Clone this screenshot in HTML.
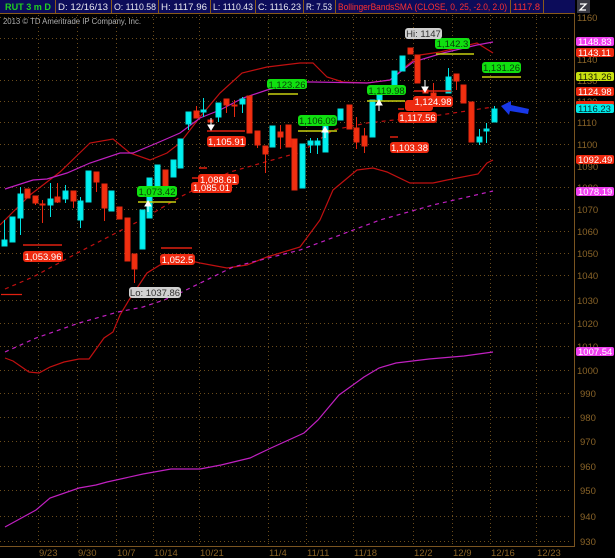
<!DOCTYPE html>
<html><head><meta charset="utf-8"><style>
html,body{margin:0;padding:0;background:#000;}
svg{display:block;font-family:"Liberation Sans",sans-serif;}
</style></head><body>
<svg width="615" height="558" viewBox="0 0 615 558" xmlns="http://www.w3.org/2000/svg">
<rect width="615" height="558" fill="#000"/>
<!-- header -->
<rect x="0" y="0" width="575" height="13" fill="#0c0c5a"/>
<line x1="0" y1="13.5" x2="575" y2="13.5" stroke="#8a5a1a" stroke-width="1"/>
<g stroke="#8a5a1a" stroke-width="1">
<line x1="55.5" y1="0" x2="55.5" y2="13"/><line x1="111.5" y1="0" x2="111.5" y2="13"/>
<line x1="158.5" y1="0" x2="158.5" y2="13"/><line x1="210.5" y1="0" x2="210.5" y2="13"/>
<line x1="255.5" y1="0" x2="255.5" y2="13"/><line x1="303.5" y1="0" x2="303.5" y2="13"/>
<line x1="335.5" y1="0" x2="335.5" y2="13"/><line x1="510.5" y1="0" x2="510.5" y2="13"/>
<line x1="543.5" y1="0" x2="543.5" y2="13"/>
</g>
<g font-size="9.5" fill="#e8e8f0" lengthAdjust="spacingAndGlyphs">
<text x="5" y="10" fill="#20d020" font-weight="bold" textLength="46" lengthAdjust="spacingAndGlyphs">RUT 3 m D</text>
<text x="58" y="10" textLength="50" lengthAdjust="spacingAndGlyphs">D: 12/16/13</text>
<text x="114" y="10" textLength="42" lengthAdjust="spacingAndGlyphs">O: 1110.58</text>
<text x="161" y="10" textLength="46" lengthAdjust="spacingAndGlyphs">H: 1117.96</text>
<text x="213" y="10" textLength="40" lengthAdjust="spacingAndGlyphs">L: 1110.43</text>
<text x="258" y="10" textLength="43" lengthAdjust="spacingAndGlyphs">C: 1116.23</text>
<text x="306" y="10" textLength="26" lengthAdjust="spacingAndGlyphs">R: 7.53</text>
<text x="338" y="10" fill="#ff3030" textLength="169" lengthAdjust="spacingAndGlyphs">BollingerBandsSMA (CLOSE, 0, 25, -2.0, 2.0)</text>
<text x="513" y="10" fill="#ff3030" textLength="27" lengthAdjust="spacingAndGlyphs">1117.8</text>
</g>
<rect x="577" y="0" width="13" height="13" fill="#3a3a44"/>
<path d="M580 4 L586 4 L580 10 L586 10" stroke="#fff" stroke-width="1.3" fill="none"/>
<text x="3" y="24" font-size="8" fill="#b0b0b0" textLength="138" lengthAdjust="spacingAndGlyphs">2013 © TD Ameritrade IP Company, Inc.</text>

<!-- grid -->
<g stroke="#6a4c1c" stroke-width="1" stroke-dasharray="1,3">
<line x1="0" y1="17.5" x2="572" y2="17.5"/><line x1="0" y1="38.5" x2="572" y2="38.5"/>
<line x1="0" y1="59.5" x2="572" y2="59.5"/><line x1="0" y1="80.5" x2="572" y2="80.5"/>
<line x1="0" y1="101.5" x2="572" y2="101.5"/><line x1="0" y1="122.5" x2="572" y2="122.5"/>
<line x1="0" y1="144.5" x2="572" y2="144.5"/><line x1="0" y1="166.5" x2="572" y2="166.5"/>
<line x1="0" y1="187.5" x2="572" y2="187.5"/><line x1="0" y1="209.5" x2="572" y2="209.5"/>
<line x1="0" y1="231.5" x2="572" y2="231.5"/><line x1="0" y1="253.5" x2="572" y2="253.5"/>
<line x1="0" y1="275.5" x2="572" y2="275.5"/><line x1="0" y1="300.5" x2="572" y2="300.5"/>
<line x1="0" y1="323.5" x2="572" y2="323.5"/><line x1="0" y1="346.5" x2="572" y2="346.5"/>
<line x1="0" y1="370.5" x2="572" y2="370.5"/><line x1="0" y1="393.5" x2="572" y2="393.5"/>
<line x1="0" y1="417.5" x2="572" y2="417.5"/><line x1="0" y1="441.5" x2="572" y2="441.5"/>
<line x1="0" y1="466.5" x2="572" y2="466.5"/><line x1="0" y1="490.5" x2="572" y2="490.5"/>
<line x1="0" y1="516.5" x2="572" y2="516.5"/><line x1="0" y1="541.5" x2="572" y2="541.5"/>
<line x1="38.5" y1="15" x2="38.5" y2="546"/><line x1="77.5" y1="15" x2="77.5" y2="546"/>
<line x1="116.5" y1="15" x2="116.5" y2="546"/><line x1="153.5" y1="15" x2="153.5" y2="546"/>
<line x1="199.5" y1="15" x2="199.5" y2="546"/><line x1="268.5" y1="15" x2="268.5" y2="546"/>
<line x1="306.5" y1="15" x2="306.5" y2="546"/><line x1="353.5" y1="15" x2="353.5" y2="546"/>
<line x1="413.5" y1="15" x2="413.5" y2="546"/><line x1="452.5" y1="15" x2="452.5" y2="546"/>
<line x1="490.5" y1="15" x2="490.5" y2="546"/><line x1="536.5" y1="15" x2="536.5" y2="546"/>
</g>
<!-- axes -->
<line x1="574.5" y1="14" x2="574.5" y2="547" stroke="#7a5420" stroke-width="1"/>
<line x1="0" y1="546.5" x2="575" y2="546.5" stroke="#7a5420" stroke-width="1"/>
<g font-size="9.5" fill="#8a6428">
<text x="577" y="21">1160</text><text x="577" y="63">1140</text><text x="577" y="84">1130</text>
<text x="577" y="105">1120</text><text x="577" y="126">1110</text><text x="577" y="148">1100</text>
<text x="577" y="170">1090</text><text x="577" y="191">1080</text><text x="577" y="213">1070</text>
<text x="577" y="235">1060</text><text x="577" y="257">1050</text><text x="577" y="279">1040</text>
<text x="577" y="304">1030</text><text x="577" y="327">1020</text><text x="577" y="350">1010</text>
<text x="577" y="374">1000</text><text x="580" y="397">990</text><text x="580" y="421">980</text>
<text x="580" y="445">970</text><text x="580" y="470">960</text><text x="580" y="494">950</text>
<text x="580" y="520">940</text><text x="580" y="545">930</text>
<text x="39" y="556">9/23</text><text x="78" y="556">9/30</text><text x="117" y="556">10/7</text>
<text x="154" y="556">10/14</text><text x="200" y="556">10/21</text><text x="269" y="556">11/4</text>
<text x="307" y="556">11/11</text><text x="354" y="556">11/18</text><text x="414" y="556">12/2</text>
<text x="453" y="556">12/9</text><text x="491" y="556">12/16</text><text x="537" y="556">12/23</text>
</g>

<!-- indicator lines -->
<g fill="none" stroke-width="1.2">
<polyline stroke="#c01010" points="0,225 5,220 30,195 60,172 90,143 113,139 130,153 150,160 167,153 180,143 200,117 220,93 242,73 267,67 300,63 313,63 327,77 343,82 367,83 390,80 410,63 420,55 440,52 477,43 493,53"/>
<polyline stroke="#c01010" points="5,358 13,361 29,372 39,373 50,367 64,362 79,359 89,359 104,338 113,332 120,315 129,300 147,273 160,265 187,260 200,263 227,268 247,265 267,257 300,247 320,220 333,190 357,170 373,168 387,172 410,183 433,183 447,180 478,174 487,163 493,160"/>
<polyline stroke="#c020c0" points="5,189 33,180 47,179 67,173 90,163 120,153 133,153 157,143 180,133 200,118 220,110 243,98 267,90 300,82 313,82 367,83 390,80 413,62 443,53 477,45 493,42"/>
<polyline stroke="#c01010" stroke-dasharray="4,4" points="5,289 33,277 83,250 143,219 180,197 230,172 290,155 300,153 333,130 367,123 440,115 493,107"/>
<polyline stroke="#c020c0" stroke-dasharray="4,4" points="5,352 36,338 79,323 118,312 143,307 164,300 180,293 233,267 300,250 380,220 433,205 493,191"/>
<polyline stroke="#c020c0" points="5,527 36,510 50,498 79,488 96,485 107,482 143,474 171,469 200,469 221,465 250,458 271,448 304,433 318,420 339,395 364,377 379,368 396,363 429,359 464,356 493,352"/>
</g>
<line x1="1" y1="294.5" x2="22" y2="294.5" stroke="#e02010" stroke-width="1.2"/>

<!-- candles -->
<g stroke-width="1">
<g stroke="#00e0e0" fill="#00f0f0">
<line x1="4.5" y1="220" x2="4.5" y2="246"/><rect x="2" y="240" width="5" height="6"/>
<rect x="10" y="217" width="5" height="25"/>
<line x1="20.5" y1="187" x2="20.5" y2="235"/><rect x="18" y="194" width="5" height="24"/>
<line x1="50.5" y1="183" x2="50.5" y2="217"/><rect x="48" y="199" width="5" height="6"/>
<line x1="65.5" y1="185" x2="65.5" y2="203"/><rect x="63" y="191" width="5" height="8"/>
<line x1="80.5" y1="197" x2="80.5" y2="228"/><rect x="78" y="201" width="5" height="19"/>
<rect x="86" y="171" width="5" height="31"/>
<rect x="109" y="191" width="5" height="20"/>
<rect x="140" y="210" width="5" height="39"/>
<rect x="147" y="178" width="5" height="40"/>
<rect x="155" y="165" width="5" height="22"/>
<rect x="171" y="160" width="5" height="17"/>
<rect x="178" y="139" width="5" height="29"/>
<line x1="188.5" y1="112" x2="188.5" y2="130"/><rect x="186" y="112" width="5" height="12"/>
<line x1="203.5" y1="98" x2="203.5" y2="117"/><rect x="201" y="110" width="5" height="2"/>
<line x1="218.5" y1="103" x2="218.5" y2="122"/><rect x="216" y="103" width="5" height="14"/>
<line x1="242.5" y1="97" x2="242.5" y2="113"/><rect x="240" y="99" width="5" height="5"/>
<rect x="270" y="126" width="5" height="21"/>
<rect x="300" y="144" width="5" height="44"/>
<line x1="310.5" y1="138" x2="310.5" y2="153"/><rect x="308" y="141" width="5" height="4"/>
<line x1="317.5" y1="138" x2="317.5" y2="154"/><rect x="315" y="141" width="5" height="4"/>
<rect x="323" y="126" width="5" height="26"/>
<rect x="338" y="109" width="5" height="11"/>
<rect x="370" y="100" width="5" height="37"/>
<rect x="377" y="95" width="5" height="6"/>
<rect x="392" y="71" width="5" height="14"/>
<rect x="400" y="56" width="5" height="15"/>
<line x1="448.5" y1="68" x2="448.5" y2="93"/><rect x="446" y="77" width="5" height="16"/>
<line x1="479.5" y1="129" x2="479.5" y2="145"/><rect x="477" y="137" width="5" height="5"/>
<line x1="486.5" y1="123" x2="486.5" y2="143"/><rect x="484" y="129" width="5" height="2"/>
<line x1="494.5" y1="106" x2="494.5" y2="122"/><rect x="492" y="109" width="5" height="13"/>
</g>
<g stroke="#e82810" fill="#f03010">
<rect x="25" y="189" width="5" height="9"/>
<line x1="35.5" y1="196" x2="35.5" y2="205"/><rect x="33" y="196" width="5" height="7"/>
<line x1="42.5" y1="200" x2="42.5" y2="223"/><rect x="40" y="204" width="5" height="1"/>
<line x1="57.5" y1="183" x2="57.5" y2="203"/><rect x="55" y="197" width="5" height="5"/>
<line x1="73.5" y1="191" x2="73.5" y2="208"/><rect x="71" y="191" width="5" height="10"/>
<line x1="96.5" y1="172" x2="96.5" y2="192"/><rect x="94" y="172" width="5" height="10"/>
<line x1="104.5" y1="184" x2="104.5" y2="221"/><rect x="102" y="184" width="5" height="24"/>
<rect x="117" y="207" width="5" height="12"/>
<rect x="125" y="218" width="5" height="43"/>
<line x1="134.5" y1="254" x2="134.5" y2="283"/><rect x="132" y="254" width="5" height="15"/>
<rect x="163" y="170" width="5" height="17"/>
<line x1="196.5" y1="106" x2="196.5" y2="118"/><rect x="194" y="111" width="5" height="7"/>
<line x1="226.5" y1="99" x2="226.5" y2="113"/><rect x="224" y="99" width="5" height="6"/>
<line x1="234.5" y1="100" x2="234.5" y2="117"/><rect x="232" y="105" width="5" height="1"/>
<rect x="247" y="96" width="5" height="37"/>
<line x1="257.5" y1="131" x2="257.5" y2="148"/><rect x="255" y="131" width="5" height="14"/>
<line x1="265.5" y1="146" x2="265.5" y2="173"/><rect x="263" y="146" width="5" height="8"/>
<line x1="280.5" y1="125" x2="280.5" y2="149"/><rect x="278" y="132" width="5" height="5"/>
<rect x="286" y="125" width="5" height="22"/>
<rect x="292" y="139" width="5" height="51"/>
<rect x="347" y="105" width="5" height="24"/>
<line x1="356.5" y1="117" x2="356.5" y2="149"/><rect x="354" y="128" width="5" height="14"/>
<line x1="364.5" y1="128" x2="364.5" y2="153"/><rect x="362" y="136" width="5" height="10"/>
<rect x="408" y="48" width="5" height="6"/>
<rect x="415" y="55" width="5" height="28"/>
<rect x="423" y="90" width="5" height="3"/>
<line x1="433.5" y1="83" x2="433.5" y2="97"/><rect x="431" y="93" width="5" height="4"/>
<line x1="456.5" y1="74" x2="456.5" y2="90"/><rect x="454" y="74" width="5" height="7"/>
<rect x="461" y="85" width="5" height="18"/>
<rect x="469" y="102" width="5" height="40"/>
<rect x="208" y="120" width="5" height="2"/>
</g>
</g>

<!-- level lines -->
<g stroke-width="1.5">
<g stroke="#e02010">
<line x1="23" y1="245" x2="62" y2="245"/><line x1="161" y1="248" x2="192" y2="248"/>
<line x1="199" y1="168" x2="207" y2="168"/><line x1="207" y1="131" x2="245" y2="131"/>
<line x1="390" y1="137" x2="398" y2="137"/><line x1="414" y1="91" x2="451" y2="91"/>
<line x1="398" y1="109" x2="404" y2="109"/><line x1="192" y1="178" x2="198" y2="178"/>
</g>
<g stroke="#c8d010">
<line x1="138" y1="202" x2="176" y2="202"/><line x1="268" y1="94" x2="298" y2="94"/>
<line x1="298" y1="131" x2="337" y2="131"/><line x1="367" y1="101" x2="405" y2="101"/>
<line x1="436" y1="54" x2="474" y2="54"/><line x1="482" y1="77" x2="521" y2="77"/>
</g>
</g>
<!-- white arrows -->
<g fill="#fff" stroke="#fff">
<path d="M148 201 L145 206 L151 206 Z"/><line x1="148" y1="205" x2="148" y2="212"/>
<path d="M325 127 L322 132 L328 132 Z"/><line x1="325" y1="131" x2="325" y2="138"/>
<path d="M379 100 L376 105 L382 105 Z"/><line x1="379" y1="104" x2="379" y2="111"/>
<path d="M211 130 L208 125 L214 125 Z"/><line x1="211" y1="118" x2="211" y2="126"/>
<path d="M425 92 L422 87 L428 87 Z"/><line x1="425" y1="80" x2="425" y2="88"/>
</g>
<!-- blue arrow -->
<path d="M501 106 L511 101 L511 105 L529 109 L528 114 L510 111 L509 115 Z" fill="#1838e8"/>

<!-- bubbles -->
<g font-size="9.5" text-anchor="middle">
<g fill="#ee2a10"><rect x="23" y="251" width="40" height="11" rx="3"/><rect x="160" y="254" width="35" height="11" rx="3"/>
<rect x="191" y="182" width="41" height="11" rx="3"/><rect x="198" y="174" width="41" height="11" rx="3"/>
<rect x="207" y="136" width="39" height="11" rx="3"/><rect x="390" y="142" width="39" height="11" rx="3"/>
<rect x="405" y="100" width="28" height="11" rx="3"/><rect x="398" y="112" width="39" height="11" rx="3"/>
<rect x="413" y="96" width="40" height="11" rx="3"/></g>
<g fill="#10e010"><rect x="137" y="186" width="40" height="11" rx="3"/><rect x="267" y="79" width="40" height="10" rx="3"/>
<rect x="298" y="115" width="39" height="11" rx="3"/><rect x="367" y="85" width="39" height="10" rx="3"/>
<rect x="435" y="38" width="35" height="11" rx="3"/><rect x="482" y="62" width="39" height="11" rx="3"/></g>
<g fill="#d0d0d0"><rect x="129" y="287" width="52" height="11" rx="3"/><rect x="405" y="28" width="37" height="11" rx="3"/></g>
<g fill="#fff">
<text x="43" y="260">1,053.96</text><text x="177.5" y="263">1,052.5</text>
<text x="211.5" y="191">1,085.01</text><text x="218.5" y="183">1,088.61</text>
<text x="226.5" y="145">1,105.91</text><text x="409.5" y="151">1,103.38</text>
<text x="417.5" y="121">1,117.56</text><text x="433" y="105">1,124.98</text>
</g>
<g fill="#084008">
<text x="157" y="195">1,073.42</text><text x="287" y="88">1,123.26</text>
<text x="317.5" y="124">1,106.09</text><text x="386.5" y="94">1,119.98</text>
<text x="452.5" y="47">1,142.3</text><text x="501.5" y="71">1,131.26</text>
</g>
<g fill="#303030"><text x="155" y="296">Lo: 1037.86</text><text x="423.5" y="37">Hi: 1147</text></g>
</g>
<!-- right axis tags -->
<g font-size="9.5">
<rect x="576" y="37" width="38" height="9" rx="2" fill="#f040f0"/><text x="578" y="45" fill="#fff">1148.83</text>
<rect x="576" y="48" width="38" height="9" rx="2" fill="#ee2a10"/><text x="578" y="56" fill="#fff">1143.11</text>
<rect x="576" y="72" width="38" height="9" rx="2" fill="#c8e010"/><text x="578" y="80" fill="#202000">1131.26</text>
<rect x="576" y="87" width="38" height="9" rx="2" fill="#ee2a10"/><text x="578" y="95" fill="#fff">1124.98</text>
<rect x="576" y="101" width="38" height="4" rx="1" fill="#ee2a10"/>
<rect x="576" y="104" width="38" height="9" rx="2" fill="#00e8e8"/><text x="578" y="112" fill="#003030">1116.23</text>
<rect x="576" y="155" width="38" height="9" rx="2" fill="#ee2a10"/><text x="578" y="163" fill="#fff">1092.49</text>
<rect x="576" y="187" width="38" height="9" rx="2" fill="#f040f0"/><text x="578" y="195" fill="#fff">1078.19</text>
<rect x="576" y="347" width="38" height="9" rx="2" fill="#f040f0"/><text x="578" y="355" fill="#fff">1007.54</text>
</g>
</svg>
</body></html>
